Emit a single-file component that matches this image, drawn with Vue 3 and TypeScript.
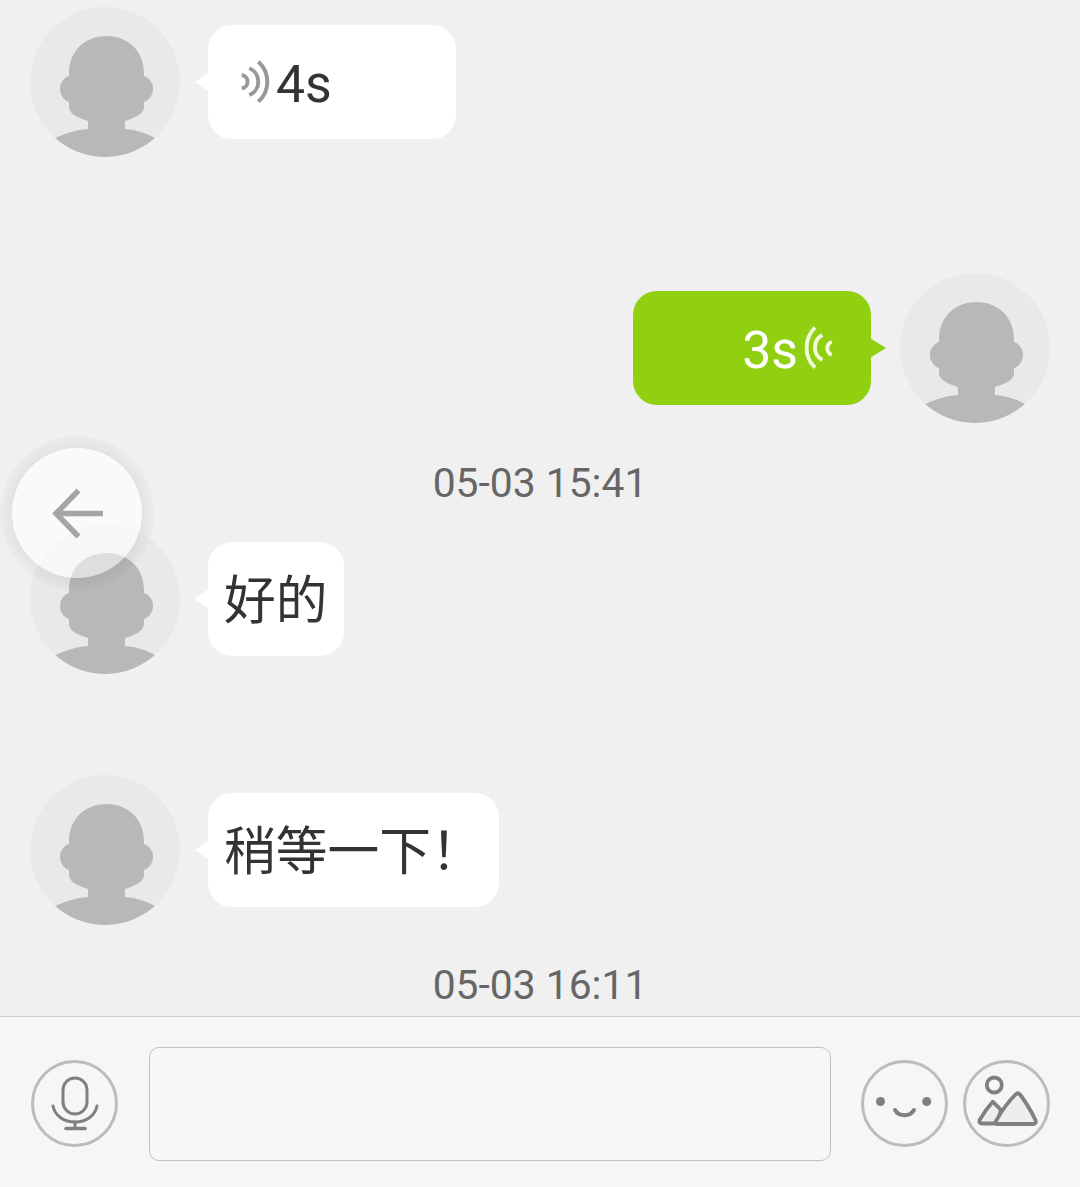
<script setup lang="ts">
interface Msg {
  id: number
  time?: string
  side: 'in' | 'out'
  kind: 'text' | 'voice'
  text: string
}
const messages: Msg[] = [
  { id: 1, side: 'in', kind: 'voice', text: '4s' },
  { id: 2, side: 'out', kind: 'voice', text: '3s' },
  { id: 3, time: '05-03 15:41', side: 'in', kind: 'text', text: '好的' },
  { id: 4, side: 'in', kind: 'text', text: '稍等一下！' },
]
</script>

<template>
  <div class="page">
    <main class="chat">
      <template v-for="m in messages" :key="m.id">
        <div v-if="m.time" class="time">{{ m.time }}</div>
        <div class="row" :class="m.side">
          <svg v-if="m.side === 'in'" class="avatar" viewBox="0 0 150 150">
            <defs>
              <clipPath :id="'c' + m.id"><circle cx="75" cy="75" r="75" /></clipPath>
            </defs>
            <circle cx="75" cy="75" r="75" fill="#e9e9e9" />
            <g :clip-path="'url(#c' + m.id + ')'" fill="#b8b8b8">
              <path d="M39 66C39 44 55 29 76.5 29S114 44 114 66V100C114 107 105 111 95 114V122C108 123 119 127 130 134V150H20V134C32 127 45 123 58 122V114C48 111 39 107 39 100Z" />
              <circle cx="44" cy="82" r="14" />
              <circle cx="109" cy="82" r="14" />
            </g>
          </svg>

          <div class="bubble" :class="[m.side, m.kind]">
            <template v-if="m.kind === 'voice' && m.side === 'in'">
              <svg class="wave" width="32" height="48" viewBox="0 0 32 48" fill="none" stroke="#999" stroke-width="3.9">
                <path d="M20.3 3.7A26.7 26.7 0 0 1 20.3 43.7" />
                <path d="M11.3 10.3A14.4 14.4 0 0 1 11.3 37" />
                <path d="M3.7 17A6.7 6.7 0 0 1 3.7 30.3" />
              </svg>
              <span class="voice-text">{{ m.text }}</span>
            </template>
            <template v-else-if="m.kind === 'voice'">
              <span class="voice-text">{{ m.text }}</span>
              <svg class="wave-out" width="34" height="48" viewBox="0 0 34 48" fill="none" stroke="#f1fbdc" stroke-width="3.8">
                <path d="M13 3.7A28 28 0 0 0 13 43.7" />
                <path d="M20.3 11A14.3 14.3 0 0 0 20.3 36" />
                <path d="M29.7 17.7A7.2 7.2 0 0 0 29.7 31" />
              </svg>
            </template>
            <span v-else class="plain">{{ m.text }}</span>
          </div>

          <svg v-if="m.side === 'out'" class="avatar" viewBox="0 0 150 150">
            <defs>
              <clipPath :id="'c' + m.id"><circle cx="75" cy="75" r="75" /></clipPath>
            </defs>
            <circle cx="75" cy="75" r="75" fill="#e9e9e9" />
            <g :clip-path="'url(#c' + m.id + ')'" fill="#b8b8b8">
              <path d="M39 66C39 44 55 29 76.5 29S114 44 114 66V100C114 107 105 111 95 114V122C108 123 119 127 130 134V150H20V134C32 127 45 123 58 122V114C48 111 39 107 39 100Z" />
              <circle cx="44" cy="82" r="14" />
              <circle cx="109" cy="82" r="14" />
            </g>
          </svg>
        </div>
      </template>
      <div class="time">05-03 16:11</div>
    </main>

    <footer class="bar">
      <button class="round" type="button" aria-label="语音">
        <svg viewBox="0 0 87 87" fill="none" stroke="#808080" stroke-width="3" stroke-linecap="round">
          <rect x="32" y="18" width="24" height="36" rx="12" />
          <path d="M22 46C24 56 33 62 44 62S64 56 66 46" />
          <path d="M44 62V68" />
          <path d="M35 68.5H54" stroke-width="3.6" />
        </svg>
      </button>
      <div class="field"></div>
      <div class="tools">
        <button class="round" type="button" aria-label="表情">
          <svg viewBox="0 0 87 87" fill="none" stroke="#808080" stroke-width="4" stroke-linecap="round">
            <circle cx="19.5" cy="41.5" r="4.5" fill="#808080" stroke="none" />
            <circle cx="65.7" cy="41.5" r="4.5" fill="#808080" stroke="none" />
            <path d="M34 50C38 57 49 57 53 50" />
          </svg>
        </button>
        <button class="round" type="button" aria-label="图片">
          <svg viewBox="0 0 87 87" fill="none" stroke="#808080" stroke-width="3.8" stroke-linecap="round" stroke-linejoin="round">
            <circle cx="31.3" cy="25" r="7.5" />
            <path d="M29.7 41.7C25 47 20 54 16.6 60C15.8 62.5 17 63.5 19 63.5H34L38 50Z" fill="#eeeeee" />
            <path d="M33 61C38 52 46 41 52.5 34.5C54 33 55.5 33 57 34.5C62 41 68 51 72.5 60C73.5 63 72 64 70 64H35C33 64 32 63 33 61Z" fill="#eeeeee" />
          </svg>
        </button>
      </div>
    </footer>

    <div class="back" aria-label="返回">
      <div class="back-inner">
        <svg class="arrow" width="54" height="52" viewBox="0 0 54 52" fill="none" stroke="#a5a5a5" stroke-width="5.4">
          <path d="M26.5 2.5L4 25.5L26.5 48.5" />
          <path d="M4 25.5H51" />
        </svg>
      </div>
    </div>
  </div>
</template>

<style scoped>
.page {
  position: relative;
  display: flex;
  flex-direction: column;
  width: 1080px;
  height: 1187px;
  overflow: hidden;
  background: #f0f0f0;
  font-family: Roboto, "Noto Sans CJK SC", sans-serif;
}
.chat {
  flex: 1;
  min-height: 0;
  overflow: hidden;
  padding-top: 7px;
  display: flex;
  flex-direction: column;
}
.time {
  flex: none;
  height: 101px;
  padding-top: 40px;
  box-sizing: border-box;
  line-height: 40px;
  text-align: center;
  font-size: 40.8px;
  color: #666;
}
.row {
  flex: none;
  display: flex;
  align-items: center;
  height: 150px;
  padding: 0 30px;
}
.row.in {
  gap: 28px;
}
.row.out {
  justify-content: flex-end;
  gap: 29px;
  margin-top: 116px;
}
.row.in + .row.in {
  margin-top: 101px;
}
.avatar {
  flex: none;
  width: 150px;
  height: 150px;
}
.bubble {
  position: relative;
  display: flex;
  align-items: center;
  box-sizing: border-box;
  height: 114px;
  padding: 0 16px;
  border-radius: 24px;
  font-size: 51.75px;
  color: #333;
  background: #fff;
  white-space: nowrap;
}
.plain {
  padding-bottom: 5px;
}
.bubble.in::before {
  content: "";
  position: absolute;
  left: -13px;
  top: 47px;
  width: 14px;
  height: 20px;
  background: #fff;
  clip-path: polygon(0 50%, 100% 0, 100% 100%);
}
.bubble.out {
  background: #91d010;
  color: #fff;
}
.bubble.out::after {
  content: "";
  position: absolute;
  right: -15px;
  top: 47px;
  width: 16px;
  height: 20px;
  background: #91d010;
  clip-path: polygon(100% 50%, 0 0, 0 100%);
}
.voice-text {
  padding-top: 4px;
}
.bubble.voice.in {
  width: 248px;
  padding-left: 30px;
}
.bubble.voice.in .voice-text {
  margin-left: 6px;
}
.bubble.voice.out {
  width: 238px;
  justify-content: flex-end;
  padding-right: 35px;
}
.wave-out {
  margin-left: 4px;
}
.bar {
  flex: none;
  box-sizing: border-box;
  height: 171px;
  display: flex;
  align-items: center;
  padding: 4px 30px 0 31px;
  gap: 31px;
  background: #f6f6f6;
  border-top: 1px solid #cbcbcb;
}
.round {
  flex: none;
  box-sizing: border-box;
  width: 87px;
  height: 87px;
  margin-bottom: 1px;
  padding: 0;
  border: 3px solid #bcbcbc;
  border-radius: 50%;
  background: transparent;
  position: relative;
}
.round svg {
  position: absolute;
  left: -3px;
  top: -3px;
  width: 87px;
  height: 87px;
}
.field {
  flex: none;
  box-sizing: border-box;
  width: 682px;
  height: 114px;
  border: 1px solid #c2c2c2;
  border-radius: 10px;
  background: #f7f7f7;
}
.tools {
  flex: none;
  display: flex;
  gap: 15px;
  margin-left: -1px;
}
.back {
  position: absolute;
  left: 0;
  top: 436px;
  width: 154px;
  height: 154px;
  border-radius: 50%;
  display: flex;
  align-items: center;
  justify-content: center;
  background: radial-gradient(circle closest-side, transparent 84%, rgba(0, 0, 0, 0.055) 84.5%, rgba(0, 0, 0, 0.02) 100%);
}
.back-inner {
  width: 130px;
  height: 130px;
  border-radius: 50%;
  display: flex;
  align-items: center;
  justify-content: center;
  background: rgba(255, 255, 255, 0.5);
  backdrop-filter: brightness(1.02);
}
.arrow {
  margin: 2px 0 0 3px;
}
</style>
